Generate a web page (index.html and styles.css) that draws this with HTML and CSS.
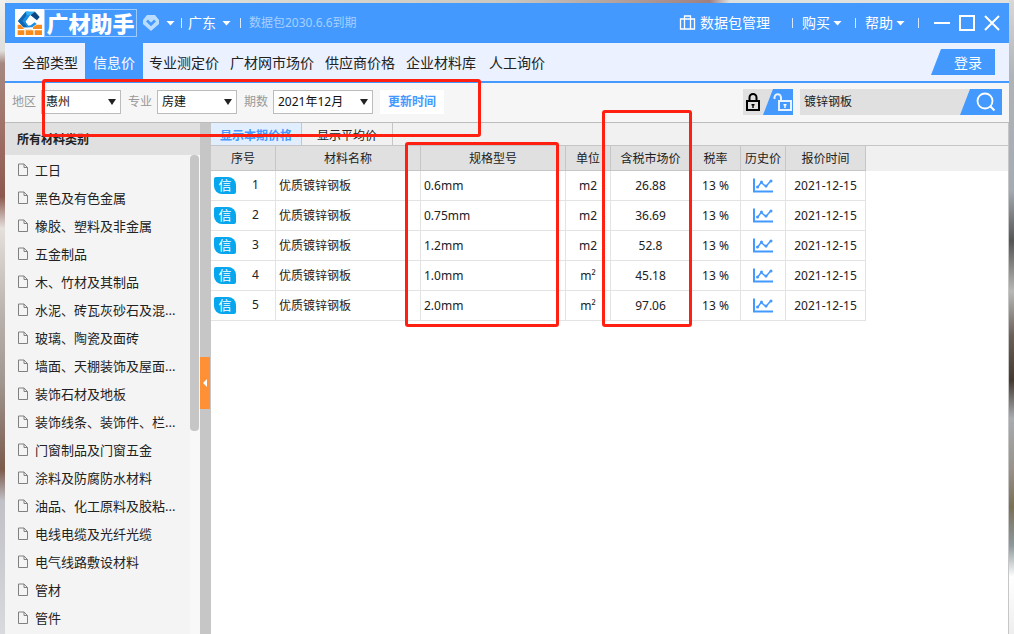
FILE: index.html
```html
<!DOCTYPE html>
<html lang="zh-CN">
<head>
<meta charset="utf-8">
<meta name="viewport" content="width=device-width, initial-scale=1">
<title>广材助手</title>
<link rel="stylesheet" href="styles.css">
</head>
<body>
<svg class="defs" aria-hidden="true">
  <symbol id="doc" viewBox="0 0 10 13"><path d="M.5 1h5.500l3.500 3.500v8h-9zM6 1v3.500h3.500" fill="none" stroke="#808080"/></symbol>
  <symbol id="chart" viewBox="0 0 20 14"><path d="M1 0v13h19" fill="none" stroke="#4499ff" stroke-width="2"/><path d="M4.500 9L8 4l5 4 5-6" fill="none" stroke="#4499ff" stroke-width="1.500"/><g fill="#4499ff"><circle cx="4.500" cy="8.500" r="1.500"/><circle cx="8.500" cy="3.500" r="1.500"/><circle cx="13" cy="7.500" r="1.500"/><circle cx="18" cy="2.500" r="1.500"/></g></symbol>
</svg>
<div class="window">
  <header class="titlebar">
    <svg class="logo" viewBox="0 0 87 84" aria-hidden="true">
      <path d="M9 36L32 8h28L46 19 32 38l12 17H25z" fill="#1a8fe3"/>
      <path d="M9 36L32 8h10L22 36l16 19H25z" fill="#1166b4"/>
      <path d="M32 8h28L46 19H35z" fill="#2fb0f5"/>
      <path d="M60 8l14 16-8 10-20-15z" fill="#0d4684"/>
      <path d="M32 38l14-19 9 7-9 12 8 10 12-9 5 5-15 11H44z" fill="#fff"/>
      <path d="M37 55l-6-9 8 4 8-1 12-9 6 5-13 10z" fill="#1a8fe3"/>
      <path d="M8 47h9l10 13H8zM65 47h16v13H54v-5zM30 60h20v1H30zM8 64h20v14H8zM32 64h23v14H32zM59 64h22v14H59z" fill="#f98a1c"/>
    </svg>
    <h1 class="brand">广材助手</h1>
    <button class="vip" aria-label="会员"><svg viewBox="0 0 16 16"><path d="M4 0h8l4 5v4l-8 7-8-7V5z" fill="#b9dcff"/><path d="M4 5.500l4 4 4-4" fill="none" stroke="#4499ff" stroke-width="2.500"/></svg><i class="caret"></i></button>
    <i class="bar"></i>
    <button class="region">广东<i class="caret"></i></button>
    <i class="bar"></i>
    <span class="expiry">数据包2030.6.6到期</span>
    <div class="tools">
      <button class="pack"><svg viewBox="0 0 17 16"><path d="M1.500 4h14v10h-14zM5.500 4V1h6v13M5.500 4v10" fill="none" stroke="#fff" stroke-width="1.300"/></svg>数据包管理</button>
      <i class="bar"></i>
      <button class="menu">购买<i class="caret"></i></button>
      <i class="bar"></i>
      <button class="menu">帮助<i class="caret"></i></button>
      <i class="bar"></i>
      <div class="controls">
        <button aria-label="最小化"><svg viewBox="0 0 16 16"><path d="M0 8h16" stroke="#fff" stroke-width="2"/></svg></button>
        <button aria-label="最大化"><svg viewBox="0 0 16 16"><path d="M1 1h14v14H1z" fill="none" stroke="#fff" stroke-width="2"/></svg></button>
        <button aria-label="关闭"><svg viewBox="0 0 16 16"><path d="M1 1l14 14M15 1L1 15" stroke="#fff" stroke-width="2"/></svg></button>
      </div>
    </div>
  </header>
  <nav class="nav">
    <a href="#">全部类型</a><a href="#" class="active">信息价</a><a href="#">专业测定价</a><a href="#">广材网市场价</a><a href="#">供应商价格</a><a href="#">企业材料库</a><a href="#">人工询价</a>
    <button class="login">登录</button>
  </nav>
  <form class="filters">
    <label for="area">地区</label>
    <span class="picker"><select id="area"><option>惠州</option></select></span>
    <label for="major">专业</label>
    <span class="picker"><select id="major"><option>房建</option></select></span>
    <label for="period">期数</label>
    <span class="picker wide"><select id="period"><option>2021年12月</option></select></span>
    <button type="button" class="update">更新时间</button>
    <div class="locks">
      <button type="button" class="lock" aria-label="锁定"><svg viewBox="0 0 14 18"><path d="M3.500 8V4.500a3.500 3.500 0 0 1 7 0V8M1 8h12v9H1z" fill="none" stroke="#000" stroke-width="2"/><path d="M5.500 11h3v1.500H7.700V15H6.300v-2.500h-.8z"/></svg></button>
      <button type="button" class="unlock" aria-label="解锁"><svg viewBox="0 0 19 18"><path d="M1.500 6V4.500a3.200 3.200 0 0 1 6.500 0V8M6 8h12v9H6z" fill="none" stroke="#e8f3ff" stroke-width="2"/><path d="M10.500 11h3v1.500h-.8V15h-1.400v-2.500h-.8z" fill="#fff"/></svg></button>
    </div>
    <div class="search">
      <input type="text" value="镀锌钢板" aria-label="搜索材料">
      <button type="button" aria-label="搜索"><svg viewBox="0 0 20 20"><circle cx="9" cy="9" r="7.500" fill="none" stroke="#fff" stroke-width="1.800"/><path d="M14.500 14.500l4 4" stroke="#fff" stroke-width="2"/></svg></button>
    </div>
  </form>
  <main class="body">
    <aside class="sidebar">
      <h2>所有材料类别</h2>
      <div class="tree">
        <ul>
          <li><svg><use href="#doc"/></svg>工日</li>
          <li><svg><use href="#doc"/></svg>黑色及有色金属</li>
          <li><svg><use href="#doc"/></svg>橡胶、塑料及非金属</li>
          <li><svg><use href="#doc"/></svg>五金制品</li>
          <li><svg><use href="#doc"/></svg>木、竹材及其制品</li>
          <li><svg><use href="#doc"/></svg>水泥、砖瓦灰砂石及混...</li>
          <li><svg><use href="#doc"/></svg>玻璃、陶瓷及面砖</li>
          <li><svg><use href="#doc"/></svg>墙面、天棚装饰及屋面...</li>
          <li><svg><use href="#doc"/></svg>装饰石材及地板</li>
          <li><svg><use href="#doc"/></svg>装饰线条、装饰件、栏...</li>
          <li><svg><use href="#doc"/></svg>门窗制品及门窗五金</li>
          <li><svg><use href="#doc"/></svg>涂料及防腐防水材料</li>
          <li><svg><use href="#doc"/></svg>油品、化工原料及胶粘...</li>
          <li><svg><use href="#doc"/></svg>电线电缆及光纤光缆</li>
          <li><svg><use href="#doc"/></svg>电气线路敷设材料</li>
          <li><svg><use href="#doc"/></svg>管材</li>
          <li><svg><use href="#doc"/></svg>管件</li>
        </ul>
        <div class="track"><div class="thumb"></div></div>
      </div>
    </aside>
    <div class="splitter"><button aria-label="收起"></button></div>
    <section class="content">
      <div class="tabs"><button class="on">显示本期价格</button><button>显示平均价</button></div>
      <table>
        <colgroup><col class="c65"><col class="c145"><col class="c145"><col class="c45"><col class="c80"><col class="c50"><col class="c45"><col class="c80"><col></colgroup>
        <thead><tr><th>序号</th><th>材料名称</th><th>规格型号</th><th>单位</th><th>含税市场价</th><th>税率</th><th>历史价</th><th>报价时间</th><th class="rest"></th></tr></thead>
        <tbody>
          <tr><td><div class="no"><b>信</b><span>1</span></div></td><td class="l">优质镀锌钢板</td><td class="l">0.6mm</td><td>m2</td><td>26.88</td><td>13 %</td><td><svg class="chart"><use href="#chart"/></svg></td><td>2021-12-15</td><td class="rest"></td></tr>
          <tr><td><div class="no"><b>信</b><span>2</span></div></td><td class="l">优质镀锌钢板</td><td class="l">0.75mm</td><td>m2</td><td>36.69</td><td>13 %</td><td><svg class="chart"><use href="#chart"/></svg></td><td>2021-12-15</td><td class="rest"></td></tr>
          <tr><td><div class="no"><b>信</b><span>3</span></div></td><td class="l">优质镀锌钢板</td><td class="l">1.2mm</td><td>m2</td><td>52.8</td><td>13 %</td><td><svg class="chart"><use href="#chart"/></svg></td><td>2021-12-15</td><td class="rest"></td></tr>
          <tr><td><div class="no"><b>信</b><span>4</span></div></td><td class="l">优质镀锌钢板</td><td class="l">1.0mm</td><td>m²</td><td>45.18</td><td>13 %</td><td><svg class="chart"><use href="#chart"/></svg></td><td>2021-12-15</td><td class="rest"></td></tr>
          <tr><td><div class="no"><b>信</b><span>5</span></div></td><td class="l">优质镀锌钢板</td><td class="l">2.0mm</td><td>m²</td><td>97.06</td><td>13 %</td><td><svg class="chart"><use href="#chart"/></svg></td><td>2021-12-15</td><td class="rest"></td></tr>
        </tbody>
      </table>
    </section>
  </main>
</div>
<div class="mark mark-filters"></div>
<div class="mark mark-spec"></div>
<div class="mark mark-price"></div>
</body>
</html>
```

FILE: styles.css
```css
* { box-sizing: border-box; }
body {
  margin: 0;
  height: 100vh;
  overflow: hidden;
  padding: 3px 5px 0;
  font: 12px/16px "Noto Sans", "Noto Sans CJK SC", sans-serif;
  color: #222;
  background:
    linear-gradient(#d8d8d6, #b0b4b8 12%, #a4acb2 30%, #555 38%, #b8b8b6 46%, #6a6058 53%, #443a32 60%, #a8acb0 66%, #98928a 74%, #7a7058 80%, #8c989c 86%, #fff 91%, #eee) right / 5px 100% no-repeat,
    linear-gradient(#f0f0ee, #dededc 8%, #a58880 10%, #a07268 20%, #8c5850 31%, #e4e0dc 36%, #b8b0aa 50%, #a09890 60%, #7c5a4c 74%, #c0c0c6 79%, #d8dadd) left / 5px 100% no-repeat,
    linear-gradient(90deg, #ecece8, #c9c8c0 50%, #a08080 70%, #dde2e0 72%, #e0e0dc);
}
button { border: 0; padding: 0; margin: 0; background: none; font: inherit; color: inherit; display: flex; align-items: center; }
svg { display: block; flex: none; }
.defs { display: none; }
.window { height: 100%; display: flex; flex-direction: column; background: #fff; }

.titlebar { height: 40px; flex: none; background: #4499ff; color: #fff; display: flex; align-items: center; padding-left: 10px; font-size: 14px; }
.logo { width: 29px; height: 28px; background: #fff; }
.brand { margin: 0; width: 93px; height: 28px; border: 1px solid #9ccbff; font: 900 22px/24px "Noto Sans CJK SC", sans-serif; text-align: center; white-space: nowrap; }
.caret { width: 9px; height: 5px; background: #fff; clip-path: polygon(0 0, 100% 0, 50% 100%); }
.bar { width: 1px; height: 10px; background: #d8eaff; }
.vip { margin: 0 6px 0 6px; gap: 7px; }
.vip svg { width: 16px; height: 16px; }
.region { gap: 6px; margin: 0 9px 0 6px; }
.expiry { font-size: 12px; color: #a6d0ff; margin-left: 8px; }
.tools { margin-left: auto; display: flex; align-items: center; padding-right: 9px; }
.pack { gap: 4px; margin-right: 22px; }
.pack svg { width: 17px; height: 16px; }
.menu { gap: 3px; margin: 0 13px 0 9px; }
.controls { display: flex; gap: 9px; margin-left: 15px; }
.controls svg { width: 16px; height: 16px; }

.nav { height: 40px; flex: none; display: flex; background: #ebf1ff; border-bottom: 2px solid #4499ff; padding: 0 14px 0 11px; font-size: 14px; }
.nav a { color: #222; text-decoration: none; line-height: 36px; padding: 2px 5px 0 6px; }
.nav a:first-child { padding-right: 7px; }
.nav a:last-of-type { padding-left: 8px; }
.nav .active { background: #4499ff; color: #fff; padding: 2px 8px 0; }
.login { margin: 6px 0 0 auto; width: 64px; height: 26px; padding: 2px 0 0 23px; background: #4499ff; color: #fff; clip-path: polygon(10px 0, 100% 0, 100% 100%, 0 100%); }

.filters { height: 40px; flex: none; display: flex; align-items: center; background: #f6f6f6; border-bottom: 1px solid #bcbcbc; padding: 0 7px 1px 7px; }
.filters label { color: #999; width: 29px; }
.picker { position: relative; width: 80px; margin-right: 7px; }
.picker.wide { width: 100px; }
.picker select { appearance: none; display: block; width: 100%; height: 24px; border: 1px solid #bcbcbc; border-radius: 0; background: #fff; padding: 0 3px 0 4px; font: inherit; color: #111; }
.picker::after { content: ""; position: absolute; right: 5px; top: 9px; width: 8px; height: 6px; background: #222; clip-path: polygon(0 0, 100% 0, 50% 100%); pointer-events: none; }
.update { height: 24px; padding: 0 8px; background: #fff; color: #4499ff; font-weight: bold; }
.locks { display: flex; width: 50px; height: 26px; margin-left: auto; background: #e0e0e0; }
.lock { width: 20px; padding-left: 3px; }
.lock svg { width: 14px; height: 18px; }
.unlock { width: 30px; height: 26px; padding-left: 10px; background: #4499ff; clip-path: polygon(10px 0, 100% 0, 100% 100%, 0 100%); }
.unlock svg { width: 19px; height: 18px; }
.search { display: flex; width: 202px; height: 26px; margin-left: 7px; background: #e0e0e0; }
.search input { flex: 1; min-width: 0; border: 0; background: none; padding: 0 4px; font: inherit; color: #222; }
.search button { width: 42px; justify-content: center; padding-left: 10px; background: #4499ff; clip-path: polygon(10px 0, 100% 0, 100% 100%, 0 100%); }
.search svg { width: 20px; height: 20px; }

.body { flex: 1; min-height: 0; display: flex; }
.sidebar { width: 195px; flex: none; display: flex; flex-direction: column; background: #f4f4f4; }
.sidebar h2 { margin: 0; height: 32px; flex: none; background: #e0e0e0; font-size: 12px; line-height: 34px; padding-left: 12px; }
.tree { flex: 1; min-height: 0; display: flex; overflow: hidden; }
.tree ul { flex: 1; margin: 0; padding: 0 0 0 13px; list-style: none; font-size: 13px; white-space: nowrap; }
.tree li { height: 28px; display: flex; align-items: center; gap: 7px; padding-top: 1px; }
.tree li svg { width: 10px; height: 13px; }
.track { width: 10px; background: #f8f8f8; }
.thumb { width: 9px; height: 276px; border-radius: 4px; background: #c6c6c6; }
.splitter { width: 11px; flex: none; background: #c6c6c6; padding-top: 234px; }
.splitter button { width: 10px; height: 52px; background: #ff9035; justify-content: center; }
.splitter button::before { content: ""; width: 4px; height: 8px; background: #fff; clip-path: polygon(100% 0, 100% 100%, 0 50%); }

.content { flex: 1; min-width: 0; border-right: 1px solid #c6c6c6; }
.tabs { height: 23px; display: flex; background: #f1f1f1; border-bottom: 1px solid #c6c6c6; }
.tabs button { width: 91px; justify-content: center; border-right: 1px solid #c6c6c6; padding-top: 4px; }
.tabs .on { background: #e1eeff; color: #4499ff; font-weight: bold; }
table { width: 100%; table-layout: fixed; border-collapse: separate; border-spacing: 0; }
.c45 { width: 45px; }
.c50 { width: 50px; }
.c65 { width: 65px; }
.c80 { width: 80px; }
.c145 { width: 145px; }
th { height: 25px; padding: 2px 0 0; font-weight: normal; background: #e0e0e0; border: solid #c6c6c6; border-width: 0 1px 1px 0; }
td { height: 30px; padding: 0; text-align: center; border: solid #e3e3e3; border-width: 0 1px 1px 0; }
td.l { text-align: left; padding-left: 3px; }
th.rest { background: #f0f0f0; border: 0; }
td.rest { border: 0; }
.no { display: flex; align-items: center; padding: 0 0 1px 3px; }
.no b { width: 22px; height: 17px; background: #06a7ee; color: #fff; border-radius: 2px 8px 2px 8px; font-weight: normal; font-size: 13px; line-height: 17px; }
.no span { flex: 1; }
.chart { width: 20px; height: 15px; margin: 0 auto; }

.mark { position: absolute; border: 3px solid #ff2012; border-radius: 3px; pointer-events: none; }
.mark-filters { left: 42px; top: 79px; width: 439px; height: 58px; }
.mark-spec { left: 405px; top: 142px; width: 154px; height: 185px; }
.mark-price { left: 602px; top: 110px; width: 90px; height: 217px; }
```
